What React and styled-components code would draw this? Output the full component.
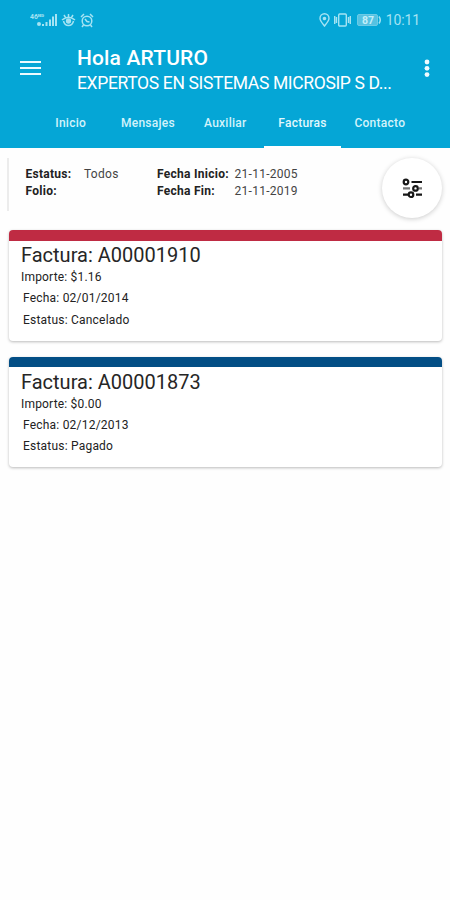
import React from "react";
import styled, { createGlobalStyle } from "styled-components";

const Global = createGlobalStyle`
  * { box-sizing: border-box; }
  body { margin: 0; background: #fefefe; font-family: Roboto, sans-serif; color: #222; }
`;

const Screen = styled.div`
  display: flex;
  flex-direction: column;
  width: 450px;
  height: 900px;
  overflow: hidden;
`;

const Header = styled.header`
  display: flex;
  flex-direction: column;
  height: 148px;
  background: #05a6d6;
  color: #fff;
`;

const StatusBar = styled.div`
  display: flex;
  justify-content: space-between;
  height: 40px;
  padding: 0 30px 0 30px;
  color: #a5e3f3;
`;

const StatusGroup = styled.div`
  display: flex;
  align-items: center;
  height: 40px;
`;

const Clock = styled.span`
  margin-left: 4px;
  font-size: 14px;
  line-height: 16px;
  letter-spacing: -0.1px;
`;

const Toolbar = styled.div`
  display: flex;
  height: 60px;
`;

const MenuButton = styled.div`
  width: 77px;
  padding: 20px 0 0 20px;
  svg { display: block; }
`;

const Titles = styled.div`
  width: 340px;
  padding-top: 6px;
`;

const Title = styled.h1`
  margin: 0;
  font-size: 21px;
  font-weight: 500;
  line-height: 25px;
  letter-spacing: 0.15px;
`;

const Subtitle = styled.div`
  font-size: 17.5px;
  line-height: 25px;
  white-space: nowrap;
  letter-spacing: -0.35px;
`;

const MoreButton = styled.div`
  padding: 18px 0 0 6px;
  svg { display: block; }
`;

const Tabs = styled.nav`
  display: flex;
  height: 48px;
  padding-left: 32px;
`;

const Tab = styled.div`
  flex: 0 0 77.3px;
  height: 48px;
  padding-top: 15px;
  border-bottom: 2px solid ${(p) => (p.$active ? "#fff" : "transparent")};
  text-align: center;
  font-size: 12px;
  line-height: 17px;
  font-weight: 500;
  letter-spacing: 0.25px;
  color: ${(p) => (p.$active ? "#e2f8fd" : "#d3f3fb")};
`;

const Filter = styled.section`
  display: flex;
  height: 82px;
  padding: 10px 8px 0 7px;
`;

const FilterInfo = styled.div`
  display: grid;
  grid-template-columns: 58.5px 73px 77.5px 90px;
  grid-auto-rows: 17px;
  align-content: start;
  width: 375px;
  height: 53px;
  padding: 8px 0 0 16.5px;
  border-left: 2px solid #ececec;
  font-size: 12px;
  line-height: 17px;
  white-space: nowrap;
`;

const Label = styled.span`
  font-weight: 700;
  letter-spacing: 0.27px;
  color: #222;
`;

const Value = styled.span`
  color: #444;
  letter-spacing: 0.28px;
`;

const FilterButton = styled.div`
  display: flex;
  align-items: center;
  justify-content: center;
  width: 60px;
  height: 60px;
  border-radius: 50%;
  background: #fff;
  box-shadow: 0 1px 5px rgba(0, 0, 0, 0.2);
`;

const List = styled.main`
  display: flex;
  flex-direction: column;
  gap: 16px;
  padding: 0 8px 0 9px;
`;

const Card = styled.article`
  height: 110.5px;
  border-radius: 4px;
  overflow: hidden;
  background: #fff;
  box-shadow: 0 1px 3px rgba(0, 0, 0, 0.27);
`;

const Strip = styled.div`
  height: 10.5px;
  background: ${(p) => p.$color};
`;

const CardBody = styled.div`
  padding: 2.5px 12px 0;
`;

const CardTitle = styled.h2`
  margin: 0;
  font-size: 20px;
  line-height: 24px;
  font-weight: 400;
  color: #262626;
`;

const Amount = styled.div`
  font-size: 12px;
  line-height: 20px;
  letter-spacing: 0.18px;
`;

const Detail = styled.div`
  padding: 1px 0 0 2px;
  font-size: 12px;
  line-height: 20.7px;
  letter-spacing: 0.21px;
`;

const SignalIcon = () => (
  <svg width="28" height="18" viewBox="0 0 28 18" fill="currentColor">
    <text x="0" y="8" fontSize="7" fontWeight="700" fontFamily="Roboto" textLength="14" lengthAdjust="spacingAndGlyphs">46ᴴᴰ</text>
    <circle cx="9" cy="13" r="2" />
    <path d="M12 13h2v2h-2zM15.500 11h2v4h-2zM19 8.500h2V15h-2zM22 5.500h2V15h-2zM25 3h2v12h-2z" />
  </svg>
);

const EyeIcon = () => (
  <svg width="15" height="16" viewBox="0 0 15 16" fill="none" stroke="currentColor" strokeWidth="1.500">
    <path d="M1 8Q7.500 2.500 14 8M2.500 9Q3.500 13.500 7.500 13.500T12.500 9M7.500 2v3M3 3l1.500 2.500M12 3l-1.500 2.500" />
    <circle cx="7.500" cy="9" r="1.900" fill="currentColor" />
  </svg>
);

const AlarmIcon = () => (
  <svg width="14" height="15" viewBox="0 0 14 15" fill="none" stroke="currentColor" strokeWidth="1.500">
    <circle cx="7" cy="8" r="4.800" />
    <path d="M1 4l3-3M13 4l-3-3M5 6l2 2.500 2.500.5M3.500 12l-1.500 2M10.500 12l1.500 2" />
  </svg>
);

const PinIcon = () => (
  <svg width="11" height="14" viewBox="0 0 11 14" fill="none" stroke="currentColor" strokeWidth="1.400">
    <path d="M5.500 13C3.500 10.500 1 8 1 5.300a4.500 4.500 0 0 1 9 0C10 8 7.500 10.500 5.500 13z" />
    <circle cx="5.500" cy="5.500" r="1.100" fill="currentColor" />
  </svg>
);

const VibrateIcon = () => (
  <svg width="17" height="14" viewBox="0 0 17 14" fill="none" stroke="currentColor" strokeWidth="1.400">
    <rect x="4.700" y="1" width="7.600" height="12" rx="1" />
    <path d="M2.500 4v6M14.500 4v6M.7 3v8M16.300 3v8" />
  </svg>
);

const BatteryIcon = () => (
  <svg width="25" height="12" viewBox="0 0 25 12">
    <rect x=".5" y=".5" width="20" height="11" rx="1.500" fill="#55c2e2" stroke="#6bcbe6" />
    <path d="M22 2.500q2.500 3.500 0 7" fill="none" stroke="#a5e3f3" strokeWidth="1.500" />
    <text x="5" y="9.800" fontSize="10.500" fontWeight="700" fontFamily="Roboto" fill="#c4eff9">87</text>
  </svg>
);

const SlidersIcon = () => (
  <svg width="21" height="21" viewBox="0 0 21 21" fill="none" stroke="#171717" strokeWidth="2.200">
    <circle cx="4" cy="4" r="2.300" />
    <path d="M9.500 4H20M7 16.700H1M14 16.700h6" />
    <path d="M1 10.400h7M17 10.400h3" stroke="#777" />
    <circle cx="13.500" cy="10.400" r="2.300" />
    <circle cx="9" cy="16.700" r="2.300" />
  </svg>
);

const Spacer = styled.span`
  width: ${(p) => p.$w}px;
`;

const tabs = ["Inicio", "Mensajes", "Auxiliar", "Facturas", "Contacto"];

const invoices = [
  { id: "A00001910", amount: "$1.16", date: "02/01/2014", status: "Cancelado", color: "#bf2b43" },
  { id: "A00001873", amount: "$0.00", date: "02/12/2013", status: "Pagado", color: "#034e85" },
];

export default function App() {
  return (
    <Screen>
      <Global />
      <Header>
        <StatusBar>
          <StatusGroup>
            <SignalIcon />
            <Spacer $w={3} />
            <EyeIcon />
            <Spacer $w={4} />
            <AlarmIcon />
          </StatusGroup>
          <StatusGroup>
            <PinIcon />
            <Spacer $w={4} />
            <VibrateIcon />
            <Spacer $w={6} />
            <BatteryIcon />
            <Clock>10:11</Clock>
          </StatusGroup>
        </StatusBar>
        <Toolbar>
          <MenuButton>
            <svg width="21" height="16" viewBox="0 0 21 16" stroke="#ecfaff" strokeWidth="2">
              <path d="M0 2h21M0 8h21M0 14h21" />
            </svg>
          </MenuButton>
          <Titles>
            <Title>Hola ARTURO</Title>
            <Subtitle>EXPERTOS EN SISTEMAS MICROSIP S D...</Subtitle>
          </Titles>
          <MoreButton>
            <svg width="8" height="20" viewBox="0 0 8 20" fill="#effbff">
              <circle cx="4" cy="4" r="2.400" />
              <circle cx="4" cy="10.300" r="2.400" />
              <circle cx="4" cy="16.600" r="2.400" />
            </svg>
          </MoreButton>
        </Toolbar>
        <Tabs>
          {tabs.map((tab) => (
            <Tab key={tab} $active={tab === "Facturas"}>{tab}</Tab>
          ))}
        </Tabs>
      </Header>
      <Filter>
        <FilterInfo>
          <Label>Estatus:</Label>
          <Value>Todos</Value>
          <Label>Fecha Inicio:</Label>
          <Value>21-11-2005</Value>
          <Label>Folio:</Label>
          <Value />
          <Label>Fecha Fin:</Label>
          <Value>21-11-2019</Value>
        </FilterInfo>
        <FilterButton><SlidersIcon /></FilterButton>
      </Filter>
      <List>
        {invoices.map((invoice) => (
          <Card key={invoice.id}>
            <Strip $color={invoice.color} />
            <CardBody>
              <CardTitle>Factura: {invoice.id}</CardTitle>
              <Amount>Importe: {invoice.amount}</Amount>
              <Detail>Fecha: {invoice.date}</Detail>
              <Detail>Estatus: {invoice.status}</Detail>
            </CardBody>
          </Card>
        ))}
      </List>
    </Screen>
  );
}
